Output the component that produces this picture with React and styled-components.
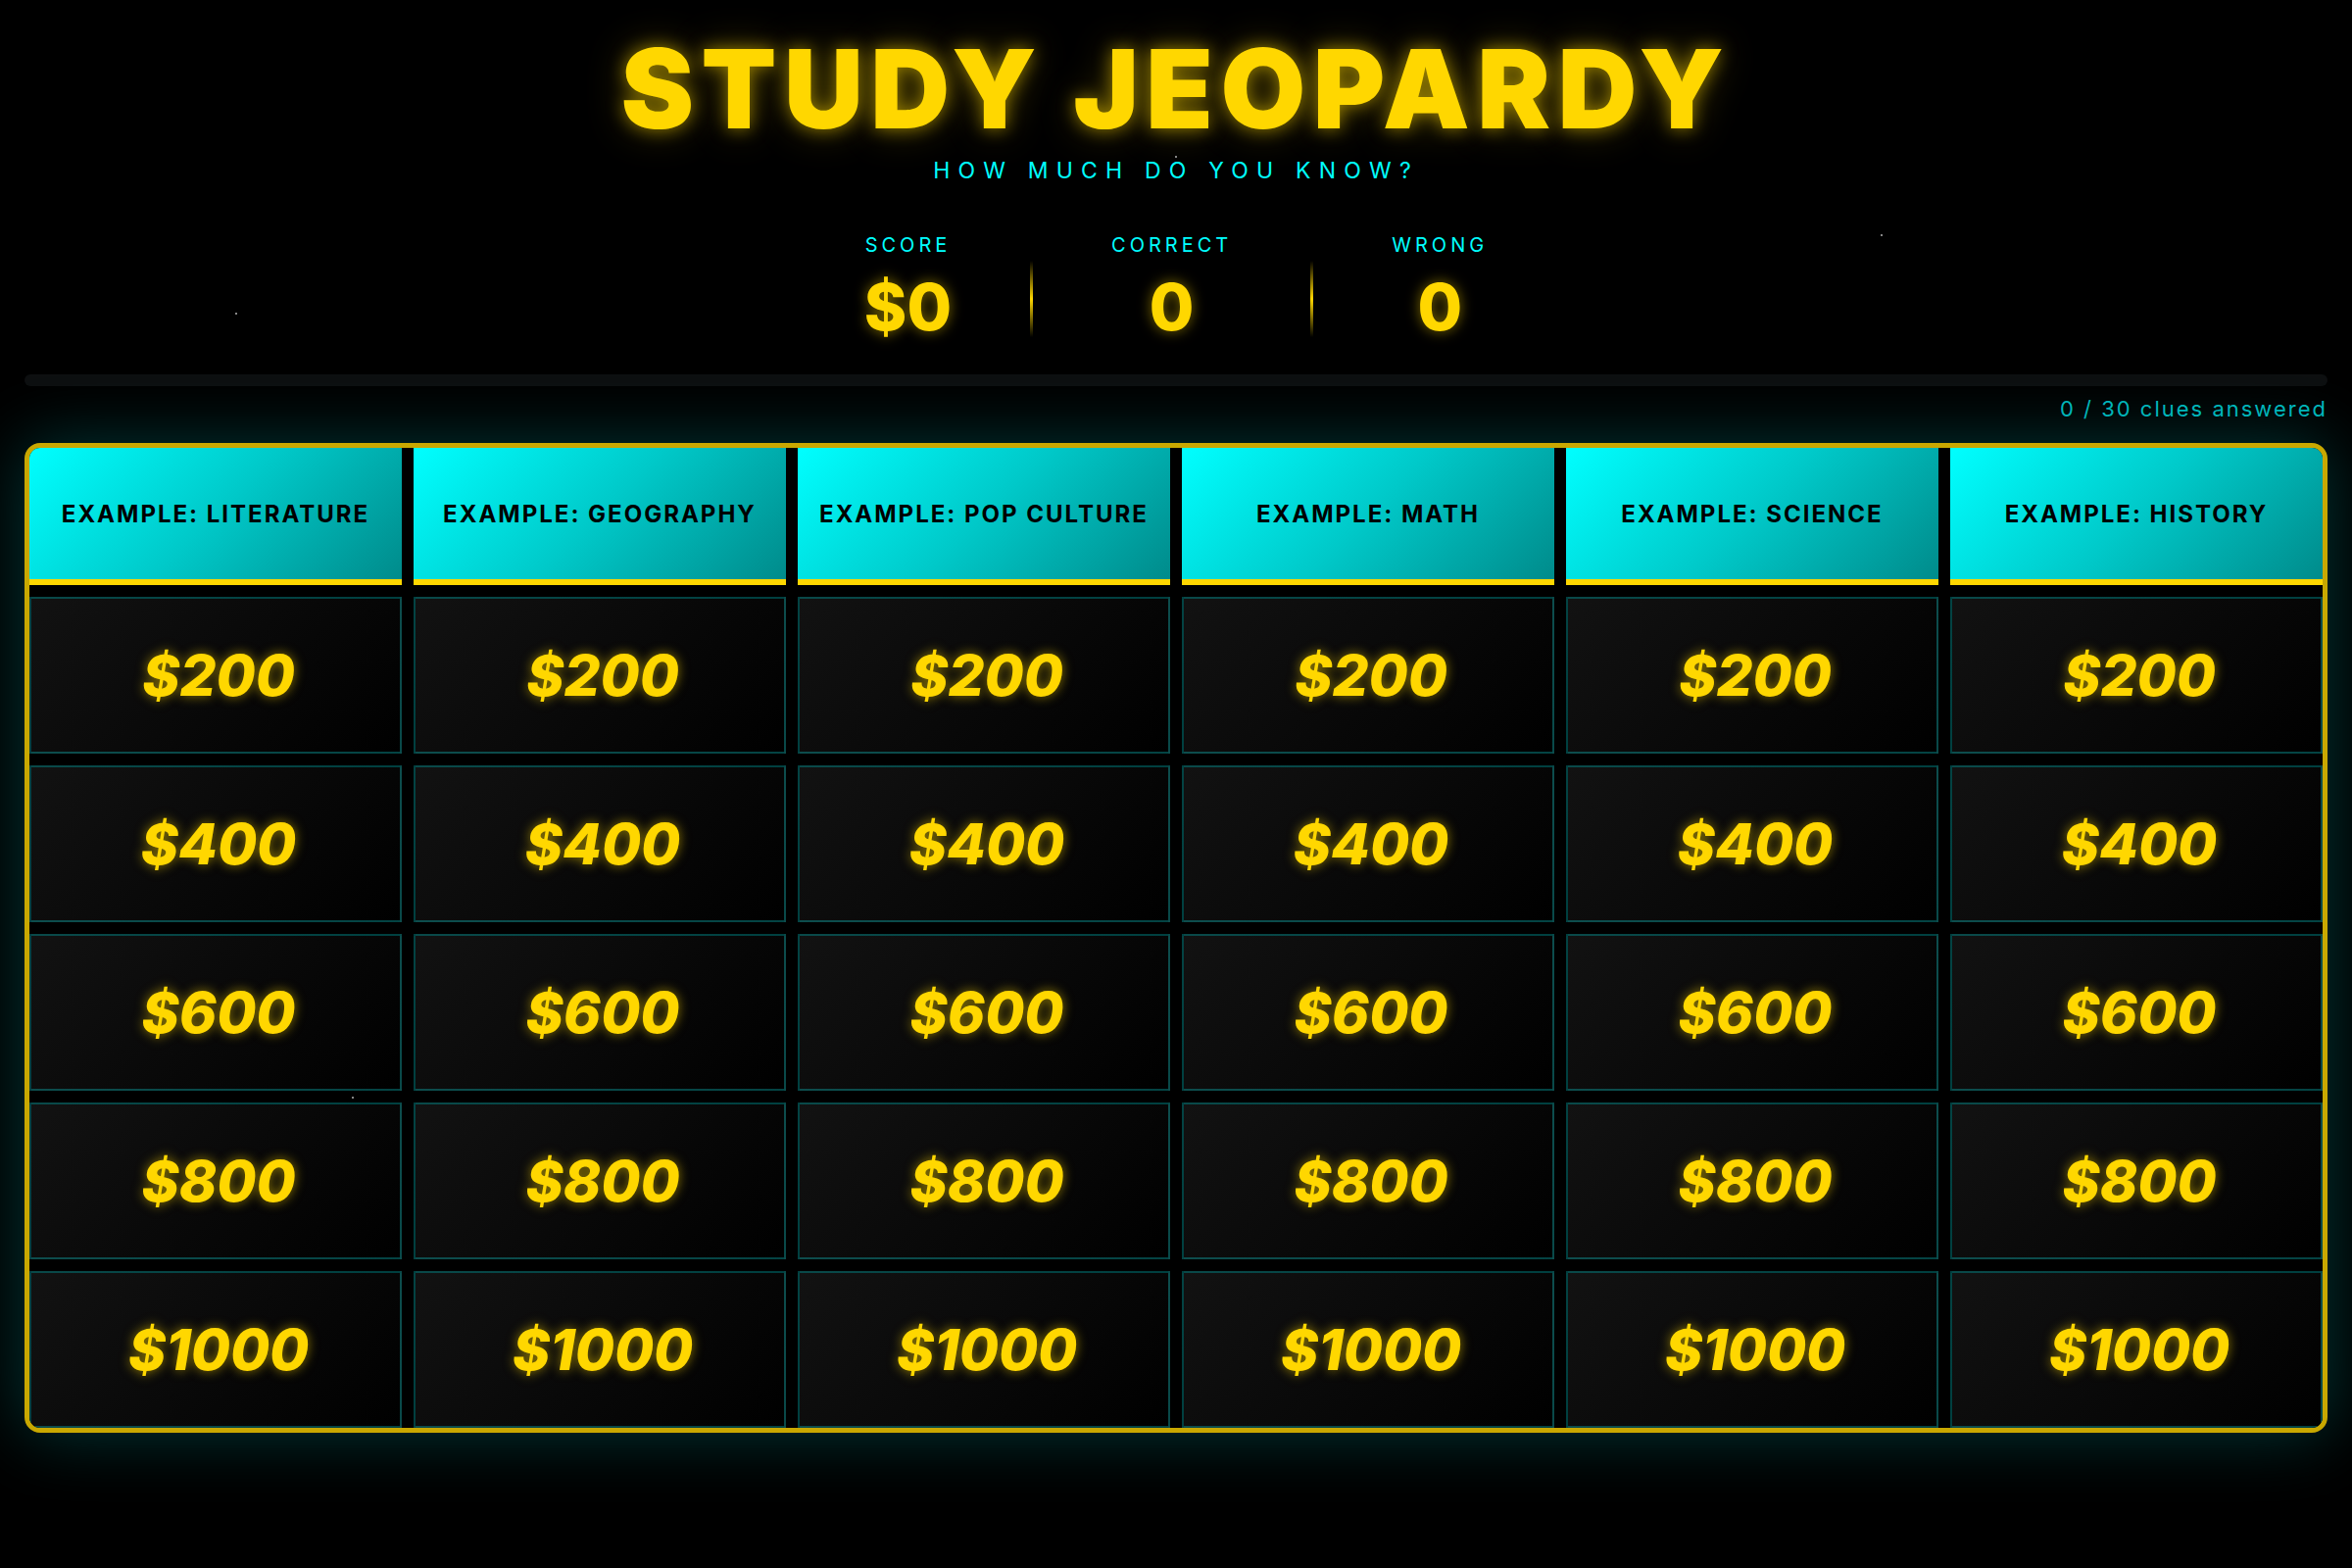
import React from "react";
import styled, { createGlobalStyle } from "styled-components";

const categories = [
  "Example: Literature",
  "Example: Geography",
  "Example: Pop Culture",
  "Example: Math",
  "Example: Science",
  "Example: History",
];

const values = [200, 400, 600, 800, 1000];

const stars = [
  { x: 240, y: 319 },
  { x: 1919, y: 239 },
  { x: 359, y: 1119 },
  { x: 1199, y: 159 },
];

const GlobalStyle = createGlobalStyle`
  html, body {
    margin: 0;
    padding: 0;
    background: #000;
  }
  body {
    font-family: "Inter", "Noto Sans", "DejaVu Sans", sans-serif;
    color: #fff;
  }
  * { box-sizing: border-box; }
`;

const Page = styled.div`
  position: relative;
  min-height: 1600px;
  padding: 0 25px;
  background: #000;
  overflow: hidden;
`;

const Star = styled.span`
  position: absolute;
  width: 2px;
  height: 2px;
  border-radius: 50%;
  background: rgba(255, 255, 255, 0.7);
`;

const Header = styled.header`
  display: flex;
  flex-direction: column;
  align-items: center;
  padding-top: 34px;
`;

const Title = styled.h1`
  margin: 0;
  font-size: 112px;
  line-height: 1;
  font-weight: 900;
  letter-spacing: 7.5px;
  color: #ffd700;
  text-transform: uppercase;
  text-shadow: 0 0 18px rgba(255, 215, 0, 0.55), 0 0 40px rgba(255, 215, 0, 0.25);
`;

const Subtitle = styled.p`
  margin: 14px 0 0;
  font-size: 23px;
  font-weight: 400;
  letter-spacing: 8.2px;
  color: #00ffff;
  text-transform: uppercase;
`;

const Stats = styled.div`
  display: flex;
  align-items: center;
  gap: 80px;
  margin-top: 50px;
`;

const Stat = styled.div`
  display: flex;
  flex-direction: column;
  align-items: center;
`;

const StatLabel = styled.span`
  font-size: 20px;
  letter-spacing: 4px;
  color: #00ffff;
  text-transform: uppercase;
`;

const StatValue = styled.span`
  margin-top: 18px;
  font-size: 66px;
  line-height: 1;
  font-weight: 800;
  color: #ffd700;
  text-shadow: 0 0 14px rgba(255, 215, 0, 0.5);
`;

const Divider = styled.div`
  width: 3px;
  height: 78px;
  margin-top: 26px;
  background: linear-gradient(to bottom, transparent, #ffd700, transparent);
`;

const Progress = styled.div`
  margin-top: 36px;
`;

const Track = styled.div`
  height: 12px;
  border-radius: 6px;
  background: #0d0f10;
  overflow: hidden;
`;

const Fill = styled.div`
  height: 100%;
  background: linear-gradient(90deg, #00ffff, #ffd700);
`;

const ProgressText = styled.p`
  margin: 10px 0 0;
  text-align: right;
  font-size: 22px;
  letter-spacing: 2px;
  color: #00b5ba;
`;

const Board = styled.div`
  display: grid;
  grid-template-columns: repeat(6, 1fr);
  grid-template-rows: 140px repeat(5, 160px);
  gap: 12px;
  margin-top: 22px;
  border: 5px solid #c9a800;
  border-radius: 16px;
  background: #000;
  overflow: hidden;
  box-shadow: 0 0 70px rgba(0, 255, 255, 0.22);
`;

const Category = styled.div`
  display: flex;
  align-items: center;
  justify-content: center;
  padding: 0 12px;
  background: linear-gradient(135deg, #00ffff 0%, #00c9c9 50%, #008b8b 100%);
  border-bottom: 6px solid #ffd700;
  color: #000;
  font-size: 24px;
  font-weight: 700;
  letter-spacing: 2px;
  text-transform: uppercase;
  text-align: center;
  white-space: nowrap;
`;

const Clue = styled.button`
  display: flex;
  align-items: center;
  justify-content: center;
  padding: 0 0 0 6px;
  border: 2px solid rgba(0, 255, 255, 0.25);
  background: linear-gradient(135deg, #121212 0%, #000 100%);
  color: #ffd700;
  font-family: inherit;
  font-size: 58px;
  font-weight: 800;
  font-style: italic;
  text-shadow: 0 0 12px rgba(255, 215, 0, 0.55);
  cursor: pointer;
`;

export default function App() {
  const answered = 0;
  const total = categories.length * values.length;

  return (
    <Page>
      <GlobalStyle />
      {stars.map((s, i) => (
        <Star key={i} style={{ left: s.x, top: s.y }} />
      ))}
      <Header>
        <Title>Study Jeopardy</Title>
        <Subtitle>How much do you know?</Subtitle>
        <Stats>
          <Stat>
            <StatLabel>Score</StatLabel>
            <StatValue>$0</StatValue>
          </Stat>
          <Divider />
          <Stat>
            <StatLabel>Correct</StatLabel>
            <StatValue>0</StatValue>
          </Stat>
          <Divider />
          <Stat>
            <StatLabel>Wrong</StatLabel>
            <StatValue>0</StatValue>
          </Stat>
        </Stats>
      </Header>

      <Progress>
        <Track>
          <Fill style={{ width: `${(answered / total) * 100}%` }} />
        </Track>
        <ProgressText>
          {answered} / {total} clues answered
        </ProgressText>
      </Progress>

      <Board>
        {categories.map((c) => (
          <Category key={c}>{c}</Category>
        ))}
        {values.map((v) =>
          categories.map((c) => <Clue key={c + v}>${v}</Clue>)
        )}
      </Board>
    </Page>
  );
}
